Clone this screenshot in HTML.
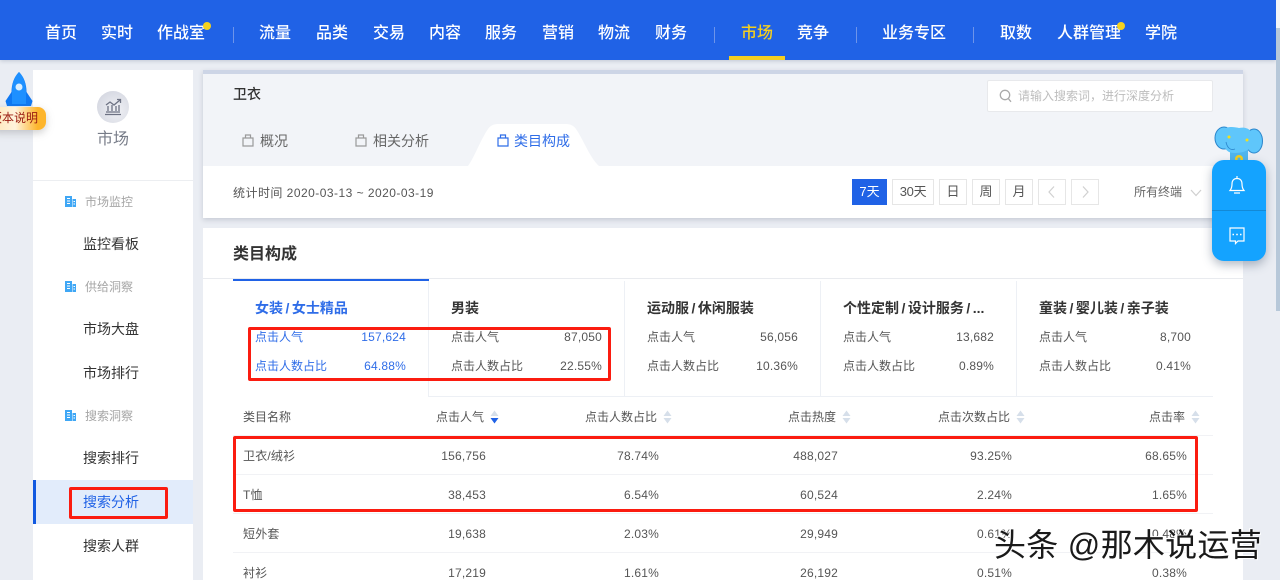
<!DOCTYPE html>
<html lang="zh"><head><meta charset="utf-8"><title>市场 - 类目构成</title>
<style>
*{box-sizing:border-box}
html,body{margin:0;padding:0;width:1280px;height:580px;overflow:hidden;background:#eaedf3;font-family:"Liberation Sans","Noto Sans CJK SC",sans-serif;color:#333}
#p{position:relative;width:1280px;height:580px;overflow:hidden}
#p div,#p svg{position:absolute}
.t{white-space:nowrap;line-height:20px;height:20px}
.r{text-align:right}
.n{font-size:16px;color:#fff;top:24px;font-weight:500}
.sep{top:27px;width:1px;height:16px;background:#6d94ea}
.g{font-size:12px;color:#a5a5a5}
.s{font-size:14px;color:#333;left:83px}
.k{font-size:12px;color:#555}
.v{font-size:12px;color:#555;text-align:right;letter-spacing:.2px}
.h{font-size:14px;font-weight:bold;color:#333}
.h i{font-style:normal;margin:0 2.500px}
.th{font-size:12px;color:#555;top:407px}
.td{font-size:12px;color:#555;letter-spacing:.2px}
.ln{left:233px;width:980px;height:1px;background:#f1f2f5}
.btn{top:179px;height:26px;border:1px solid #e6e6e6;background:#fff;font-size:13px;color:#555;text-align:center;line-height:24px}
.red{border:3px solid #fb1c10;border-radius:2px}
</style></head><body><div id="p">

<div style="left:0;top:0;width:1276px;height:60px;background:#2062e6;box-shadow:0 1px 4px rgba(30,50,90,.2)"></div>
<div class="t n" style="left:45px">首页</div>
<div class="t n" style="left:101px">实时</div>
<div class="t n" style="left:157px">作战室</div>
<div style="left:203px;top:22px;width:8px;height:8px;border-radius:50%;background:#f5d21e"></div>
<div class="sep" style="left:233px"></div>
<div class="t n" style="left:259px">流量</div>
<div class="t n" style="left:316px">品类</div>
<div class="t n" style="left:373px">交易</div>
<div class="t n" style="left:429px">内容</div>
<div class="t n" style="left:485px">服务</div>
<div class="t n" style="left:542px">营销</div>
<div class="t n" style="left:598px">物流</div>
<div class="t n" style="left:655px">财务</div>
<div class="sep" style="left:714px"></div>
<div class="t n" style="left:741px;color:#f5cf1f">市场</div>
<div style="left:729px;top:56px;width:56px;height:4px;background:#f5cf1f"></div>
<div class="t n" style="left:797px">竞争</div>
<div class="sep" style="left:856px"></div>
<div class="t n" style="left:882px">业务专区</div>
<div class="sep" style="left:973px"></div>
<div class="t n" style="left:1000px">取数</div>
<div class="t n" style="left:1057px">人群管理</div>
<div style="left:1117px;top:22px;width:8px;height:8px;border-radius:50%;background:#f5d21e"></div>
<div class="t n" style="left:1145px">学院</div>

<!-- scrollbar -->
<div style="left:1276px;top:0;width:4px;height:28px;background:#f2f4f7"></div>
<div style="left:1276px;top:28px;width:4px;height:283px;background:#b7c8d9"></div>

<!-- sidebar -->
<div style="left:33px;top:70px;width:160px;height:510px;background:#fff"></div>
<div style="left:97px;top:91px;width:32px;height:32px;border-radius:50%;background:radial-gradient(circle at 60% 60%,#f0f1f5,#ced1dc)"></div>
<svg style="left:103px;top:97px" width="20" height="20" viewBox="0 0 20 20" fill="none" stroke="#6d7283" stroke-width="1.300"><path d="M2 17.500H18M3 15H17M5 14V9M9 14V8M13 14V9M16 14V8M3 8L7 5L11 8L17 3M14 2.500H17.500V6"/></svg>
<div class="t" style="left:97px;top:130px;font-size:16px;color:#777c88">市场</div>
<div style="left:33px;top:180px;width:160px;height:1px;background:#eceef1"></div>

<!-- rocket + badge -->
<svg style="left:3px;top:71px" width="32" height="38" viewBox="0 0 32 38"><path d="M16 1C11 6 8.500 13 8.500 21L2.500 30L4 35H28L29.500 30L23.500 21C23.500 13 21 6 16 1Z" fill="#0f78f2"/><path d="M16 1C11 6 9 13 9 21V33H23V21C23 13 21 6 16 1Z" fill="#1e90ff"/><circle cx="16" cy="16" r="3.500" fill="#d9eeff"/></svg>
<div style="left:-10px;top:107px;width:56px;height:23px;border-radius:8px;background:linear-gradient(90deg,#ffe6b5,#fff3dc 45%,#fdb52c 85%);box-shadow:0 3px 8px rgba(120,120,120,.35)"></div>
<div class="t" style="left:-10px;top:108px;font-size:12px;color:#9a1b10">版本说明</div>

<svg style="left:65px;top:196px" width="11" height="11" viewBox="0 0 11 11"><path d="M0 0H7V11H0ZM7.500 3H11V11H7.500Z" fill="#3fa7f5"/><path d="M2 2.500H5M2 5H5M2 7.500H5M8.500 5.500H10M8.500 8H10" stroke="#fff"/></svg>
<div class="t g" style="left:85px;top:192px">市场监控</div>
<div class="t s" style="top:234px">监控看板</div>
<svg style="left:65px;top:281px" width="11" height="11" viewBox="0 0 11 11"><path d="M0 0H7V11H0ZM7.500 3H11V11H7.500Z" fill="#3fa7f5"/><path d="M2 2.500H5M2 5H5M2 7.500H5M8.500 5.500H10M8.500 8H10" stroke="#fff"/></svg>
<div class="t g" style="left:85px;top:277px">供给洞察</div>
<div class="t s" style="top:319px">市场大盘</div>
<div class="t s" style="top:363px">市场排行</div>
<svg style="left:65px;top:410px" width="11" height="11" viewBox="0 0 11 11"><path d="M0 0H7V11H0ZM7.500 3H11V11H7.500Z" fill="#3fa7f5"/><path d="M2 2.500H5M2 5H5M2 7.500H5M8.500 5.500H10M8.500 8H10" stroke="#fff"/></svg>
<div class="t g" style="left:85px;top:406px">搜索洞察</div>
<div class="t s" style="top:448px">搜索排行</div>
<div style="left:33px;top:480px;width:160px;height:44px;background:#e2ecfb;border-left:3px solid #1259e0"></div>
<div class="t s" style="top:492px;color:#2062e6">搜索分析</div>
<div class="red" style="left:69px;top:487px;width:99px;height:32px"></div>
<div class="t s" style="top:536px">搜索人群</div>

<!-- header card -->
<div style="left:203px;top:70px;width:1040px;height:148px;background:#fff;box-shadow:0 2px 5px rgba(40,50,80,.18)"></div>
<div style="left:203px;top:74px;width:1040px;height:92px;background:#f2f4f8"></div>
<div style="left:203px;top:70px;width:1040px;height:4px;background:#cdd5e6"></div>
<div class="t" style="left:233px;top:84px;font-size:14px;color:#333;font-weight:500">卫衣</div>
<div style="left:987px;top:80px;width:226px;height:32px;background:#fff;border:1px solid #e8e9ec;border-radius:2px"></div>
<svg style="left:999px;top:89px" width="13" height="14" viewBox="0 0 13 14" fill="none" stroke="#aaa" stroke-width="1.300"><circle cx="6" cy="6" r="4.700"/><path d="M9.500 9.800L12 12.800"/></svg>
<div class="t" style="left:1018px;top:86px;font-size:12px;color:#bdbdbd">请输入搜索词，进行深度分析</div>

<svg style="left:241px;top:133px" width="14" height="14" viewBox="0 0 14 14" fill="none" stroke="#9a9a9a" stroke-width="1.200"><path d="M2 5H12V13H2ZM4.500 5V2H9.500V5"/></svg>
<div class="t" style="left:260px;top:131px;font-size:14px;color:#666">概况</div>
<svg style="left:354px;top:133px" width="14" height="14" viewBox="0 0 14 14" fill="none" stroke="#9a9a9a" stroke-width="1.200"><path d="M2 5H12V13H2ZM4.500 5V2H9.500V5"/></svg>
<div class="t" style="left:373px;top:131px;font-size:14px;color:#666">相关分析</div>
<svg style="left:465px;top:123px" width="136" height="43" viewBox="0 0 136 43"><path d="M3 43C9 35 16 16 23 6C26 2 29 1 35 1H99C105 1 108 2 111 6C118 16 125 35 134 43Z" fill="#fff"/></svg>
<svg style="left:496px;top:133px" width="14" height="14" viewBox="0 0 14 14" fill="none" stroke="#2f6de8" stroke-width="1.200"><path d="M2 5H12V13H2ZM4.500 5V2H9.500V5"/></svg>
<div class="t" style="left:514px;top:131px;font-size:14px;color:#2f6de8">类目构成</div>

<div class="t" style="left:233px;top:183px;font-size:12px;color:#555;letter-spacing:.47px">统计时间 2020-03-13 ~ 2020-03-19</div>
<div class="btn" style="left:852px;width:35px;background:#2062e6;border-color:#2062e6;color:#fff">7天</div>
<div class="btn" style="left:892px;width:42px;letter-spacing:-.3px">30天</div>
<div class="btn" style="left:939px;width:28px">日</div>
<div class="btn" style="left:972px;width:28px">周</div>
<div class="btn" style="left:1005px;width:28px">月</div>
<div class="btn" style="left:1038px;width:28px"></div>
<svg style="left:1046px;top:186px" width="12" height="12" viewBox="0 0 12 12" fill="none" stroke="#d0d0d0" stroke-width="1.200"><path d="M8 0.500L3 6L8 11.500"/></svg>
<div class="btn" style="left:1071px;width:28px"></div>
<svg style="left:1079px;top:186px" width="12" height="12" viewBox="0 0 12 12" fill="none" stroke="#d0d0d0" stroke-width="1.200"><path d="M4 0.500L9 6L4 11.500"/></svg>
<div class="t" style="left:1134px;top:182px;font-size:12px;color:#666">所有终端</div>
<svg style="left:1190px;top:188px" width="12" height="10" viewBox="0 0 12 10" fill="none" stroke="#cfcfcf" stroke-width="1.200"><path d="M1 2L6 7.500L11 2"/></svg>

<!-- main card -->
<div style="left:203px;top:228px;width:1040px;height:352px;background:#fff"></div>
<div class="t" style="left:233px;top:245px;font-size:16px;font-weight:bold;color:#333">类目构成</div>
<div style="left:203px;top:278px;width:1040px;height:1px;background:#e9ebef"></div>
<div style="left:233px;top:279px;width:196px;height:2px;background:#2062e6"></div>

<div style="left:428px;top:281px;width:1px;height:116px;background:#edf0f5"></div>
<div style="left:624px;top:281px;width:1px;height:116px;background:#edf0f5"></div>
<div style="left:820px;top:281px;width:1px;height:116px;background:#edf0f5"></div>
<div style="left:1016px;top:281px;width:1px;height:116px;background:#edf0f5"></div>
<div style="left:428px;top:396px;width:785px;height:1px;background:#edf0f5"></div>

<div class="t h" style="left:255px;top:298px;color:#2f6de8">女装<i>/</i>女士精品</div>
<div class="t k" style="left:255px;top:327px;color:#2f6de8">点击人气</div>
<div class="t v" style="left:326px;width:80px;top:327px;color:#2f6de8">157,624</div>
<div class="t k" style="left:255px;top:356px;color:#2f6de8">点击人数占比</div>
<div class="t v" style="left:326px;width:80px;top:356px;color:#2f6de8">64.88%</div>

<div class="t h" style="left:451px;top:298px">男装</div>
<div class="t k" style="left:451px;top:327px">点击人气</div>
<div class="t v" style="left:522px;width:80px;top:327px">87,050</div>
<div class="t k" style="left:451px;top:356px">点击人数占比</div>
<div class="t v" style="left:522px;width:80px;top:356px">22.55%</div>

<div class="t h" style="left:647px;top:298px">运动服<i>/</i>休闲服装</div>
<div class="t k" style="left:647px;top:327px">点击人气</div>
<div class="t v" style="left:718px;width:80px;top:327px">56,056</div>
<div class="t k" style="left:647px;top:356px">点击人数占比</div>
<div class="t v" style="left:718px;width:80px;top:356px">10.36%</div>

<div class="t h" style="left:843px;top:298px">个性定制<i>/</i>设计服务<i>/</i>...</div>
<div class="t k" style="left:843px;top:327px">点击人气</div>
<div class="t v" style="left:914px;width:80px;top:327px">13,682</div>
<div class="t k" style="left:843px;top:356px">点击人数占比</div>
<div class="t v" style="left:914px;width:80px;top:356px">0.89%</div>

<div class="t h" style="left:1039px;top:298px">童装<i>/</i>婴儿装<i>/</i>亲子装</div>
<div class="t k" style="left:1039px;top:327px">点击人气</div>
<div class="t v" style="left:1111px;width:80px;top:327px">8,700</div>
<div class="t k" style="left:1039px;top:356px">点击人数占比</div>
<div class="t v" style="left:1111px;width:80px;top:356px">0.41%</div>

<!-- table -->
<div class="t th" style="left:243px">类目名称</div>
<div class="t th r" style="left:384px;width:100px">点击人气</div>
<div class="t th r" style="left:557px;width:100px">点击人数占比</div>
<div class="t th r" style="left:736px;width:100px">点击热度</div>
<div class="t th r" style="left:910px;width:100px">点击次数占比</div>
<div class="t th r" style="left:1085px;width:100px">点击率</div>
<svg style="left:490px;top:410px" width="9" height="14" viewBox="0 0 9 14"><path d="M4.500 0.500L8.500 6H0.500Z" fill="#d6dfea"/><path d="M4.500 13.500L8.500 8H0.500Z" fill="#2062e6"/></svg>
<svg style="left:663px;top:410px" width="9" height="14" viewBox="0 0 9 14" fill="#d6dfea"><path d="M4.500 0.500L8.500 6H0.500ZM4.500 13.500L8.500 8H0.500Z"/></svg>
<svg style="left:842px;top:410px" width="9" height="14" viewBox="0 0 9 14" fill="#d6dfea"><path d="M4.500 0.500L8.500 6H0.500ZM4.500 13.500L8.500 8H0.500Z"/></svg>
<svg style="left:1016px;top:410px" width="9" height="14" viewBox="0 0 9 14" fill="#d6dfea"><path d="M4.500 0.500L8.500 6H0.500ZM4.500 13.500L8.500 8H0.500Z"/></svg>
<svg style="left:1191px;top:410px" width="9" height="14" viewBox="0 0 9 14" fill="#d6dfea"><path d="M4.500 0.500L8.500 6H0.500ZM4.500 13.500L8.500 8H0.500Z"/></svg>

<div class="ln" style="top:435px"></div>
<div class="ln" style="top:474px"></div>
<div class="ln" style="top:513px"></div>
<div class="ln" style="top:552px"></div>

<div class="t td" style="left:243px;top:446px">卫衣/绒衫</div>
<div class="t td r" style="left:386px;width:100px;top:446px">156,756</div>
<div class="t td r" style="left:559px;width:100px;top:446px">78.74%</div>
<div class="t td r" style="left:738px;width:100px;top:446px">488,027</div>
<div class="t td r" style="left:912px;width:100px;top:446px">93.25%</div>
<div class="t td r" style="left:1087px;width:100px;top:446px">68.65%</div>

<div class="t td" style="left:243px;top:485px">T恤</div>
<div class="t td r" style="left:386px;width:100px;top:485px">38,453</div>
<div class="t td r" style="left:559px;width:100px;top:485px">6.54%</div>
<div class="t td r" style="left:738px;width:100px;top:485px">60,524</div>
<div class="t td r" style="left:912px;width:100px;top:485px">2.24%</div>
<div class="t td r" style="left:1087px;width:100px;top:485px">1.65%</div>

<div class="t td" style="left:243px;top:524px">短外套</div>
<div class="t td r" style="left:386px;width:100px;top:524px">19,638</div>
<div class="t td r" style="left:559px;width:100px;top:524px">2.03%</div>
<div class="t td r" style="left:738px;width:100px;top:524px">29,949</div>
<div class="t td r" style="left:912px;width:100px;top:524px">0.61%</div>
<div class="t td r" style="left:1087px;width:100px;top:524px">0.48%</div>

<div class="t td" style="left:243px;top:563px">衬衫</div>
<div class="t td r" style="left:386px;width:100px;top:563px">17,219</div>
<div class="t td r" style="left:559px;width:100px;top:563px">1.61%</div>
<div class="t td r" style="left:738px;width:100px;top:563px">26,192</div>
<div class="t td r" style="left:912px;width:100px;top:563px">0.51%</div>
<div class="t td r" style="left:1087px;width:100px;top:563px">0.38%</div>

<!-- red boxes -->
<div class="red" style="left:248px;top:327px;width:363px;height:54px"></div>
<div class="red" style="left:233px;top:436px;width:965px;height:76px"></div>

<!-- floating -->
<svg style="left:1213px;top:124px" width="52" height="40" viewBox="0 0 52 40"><rect x="17" y="26" width="18" height="14" fill="#4fb5ee"/><ellipse cx="11" cy="14" rx="9" ry="11" fill="#5fc6fb" stroke="#2b86cc"/><ellipse cx="41" cy="17" rx="8.500" ry="12" fill="#5fc6fb" stroke="#2b86cc"/><path d="M11 5C15 2 22 3 26 4C31 3 36 4 38 8C40 14 40 21 36 25C32 29 20 30 16 28C12 26 9 20 10 12Z" fill="#5fc6fb"/><path d="M13 18C14 23 17 27 22 25" fill="none" stroke="#2b86cc" stroke-width=".8"/><circle cx="26" cy="35" r="4" fill="#f4cf1a"/><circle cx="26" cy="35" r="1.500" fill="#4fb5ee"/><circle cx="16" cy="13" r="1.500" fill="#f4e11a"/><circle cx="34" cy="16" r="1.500" fill="#f4e11a"/></svg>
<div style="left:1212px;top:160px;width:54px;height:101px;border-radius:12px;background:#14a3ff;box-shadow:0 4px 10px rgba(40,60,90,.35)"></div>
<div style="left:1212px;top:210px;width:54px;height:1px;background:#1389d6"></div>
<svg style="left:1228px;top:175px" width="18" height="20" viewBox="0 0 18 20" fill="none" stroke="#fff" stroke-width="1.200"><path d="M2 15.500H16C14 13 14 11 14 9C14 5.500 12 3.500 9 3.500C6 3.500 4 5.500 4 9C4 11 4 13 2 15.500ZM9 1V3.500M6 18H12"/></svg>
<svg style="left:1228px;top:226px" width="18" height="20" viewBox="0 0 18 20" fill="none" stroke="#fff" stroke-width="1.200"><path d="M2 2H16V15H10L7.500 17.500V15H2Z"/><path d="M4.500 8.500H6M8.200 8.500H9.800M12 8.500H13.500" stroke-width="1.400"/></svg>

<!-- watermark -->
<div class="t" style="left:994px;top:526px;height:38px;line-height:38px;font-size:32px;letter-spacing:.3px;color:#1a1a1a;text-shadow:1px 1px 0 #fff,-1px -1px 0 #fff">头条 @那木说运营</div>

</div></body></html>
